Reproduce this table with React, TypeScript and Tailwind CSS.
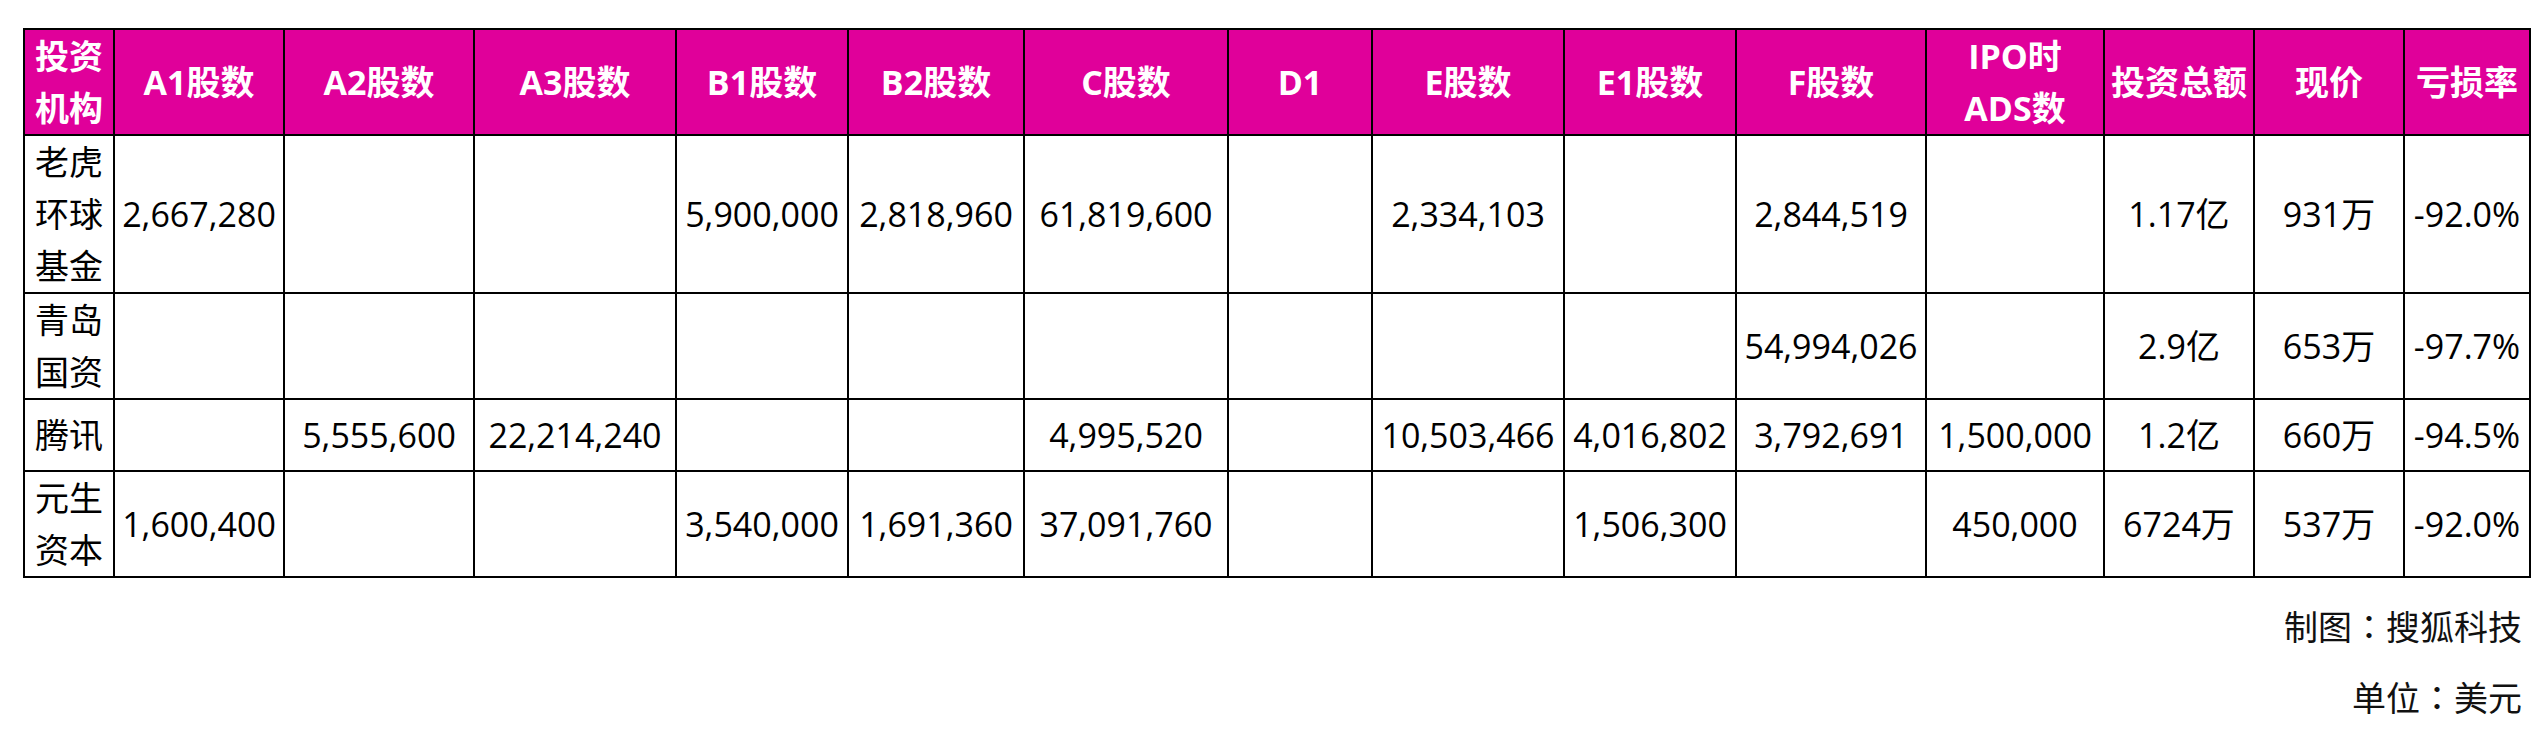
const headers: string[][] = [
  ["投资", "机构"],
  ["A1股数"],
  ["A2股数"],
  ["A3股数"],
  ["B1股数"],
  ["B2股数"],
  ["C股数"],
  ["D1"],
  ["E股数"],
  ["E1股数"],
  ["F股数"],
  ["IPO时", "ADS数"],
  ["投资总额"],
  ["现价"],
  ["亏损率"],
];

// column widths, written out so tailwind picks them up
const colClasses = [
  "w-[90px]",
  "w-[170px]",
  "w-[190px]",
  "w-[202px]",
  "w-[172px]",
  "w-[176px]",
  "w-[204px]",
  "w-[144px]",
  "w-[192px]",
  "w-[172px]",
  "w-[190px]",
  "w-[178px]",
  "w-[150px]",
  "w-[150px]",
  "w-[126px]",
];

type Row = { name: string[]; height: string; cells: string[] };

const rows: Row[] = [
  {
    name: ["老虎", "环球", "基金"],
    height: "h-[156px]",
    cells: ["2,667,280", "", "", "5,900,000", "2,818,960", "61,819,600", "", "2,334,103", "", "2,844,519", "", "1.17亿", "931万", "-92.0%"],
  },
  {
    name: ["青岛", "国资"],
    height: "h-[102px]",
    cells: ["", "", "", "", "", "", "", "", "", "54,994,026", "", "2.9亿", "653万", "-97.7%"],
  },
  {
    name: ["腾讯"],
    height: "h-[72px]",
    cells: ["", "5,555,600", "22,214,240", "", "", "4,995,520", "", "10,503,466", "4,016,802", "3,792,691", "1,500,000", "1.2亿", "660万", "-94.5%"],
  },
  {
    name: ["元生", "资本"],
    height: "h-[106px]",
    cells: ["1,600,400", "", "", "3,540,000", "1,691,360", "37,091,760", "", "", "1,506,300", "", "450,000", "6724万", "537万", "-92.0%"],
  },
];

const cell = "border-2 border-black p-0 text-[34px] leading-[52px] text-center align-middle";

export default function App() {
  return (
    <div className="bg-white w-[2546px] h-[750px] pl-[23px] pt-[28px] text-black font-['Open_Sans','Noto_Sans_CJK_SC',sans-serif]">
      <table className="table-fixed border-collapse w-[2508px]">
        <colgroup>
          {colClasses.map((c, i) => (
            <col key={i} className={c} />
          ))}
        </colgroup>
        <thead>
          <tr className="bg-[#e0009a]">
            {headers.map((h, i) => (
              <th key={i} className={`${cell} h-[102px] font-bold text-white`}>
                {h.map((line) => (
                  <div key={line}>{line}</div>
                ))}
              </th>
            ))}
          </tr>
        </thead>
        <tbody>
          {rows.map((r) => (
            <tr key={r.name.join("")}>
              <td className={`${cell} ${r.height}`}>
                {r.name.map((line) => (
                  <div key={line}>{line}</div>
                ))}
              </td>
              {r.cells.map((c, i) => (
                <td key={i} className={`${cell} whitespace-nowrap`}>
                  {c}
                </td>
              ))}
            </tr>
          ))}
        </tbody>
      </table>
      <div className="w-[2508px] pr-[9px] mt-[14px] flex flex-col items-end text-[34px] leading-[71px] text-[#111] font-['Open_Sans','Noto_Sans_CJK_TC',sans-serif]">
        <p>制图：搜狐科技</p>
        <p>单位：美元</p>
      </div>
    </div>
  );
}
